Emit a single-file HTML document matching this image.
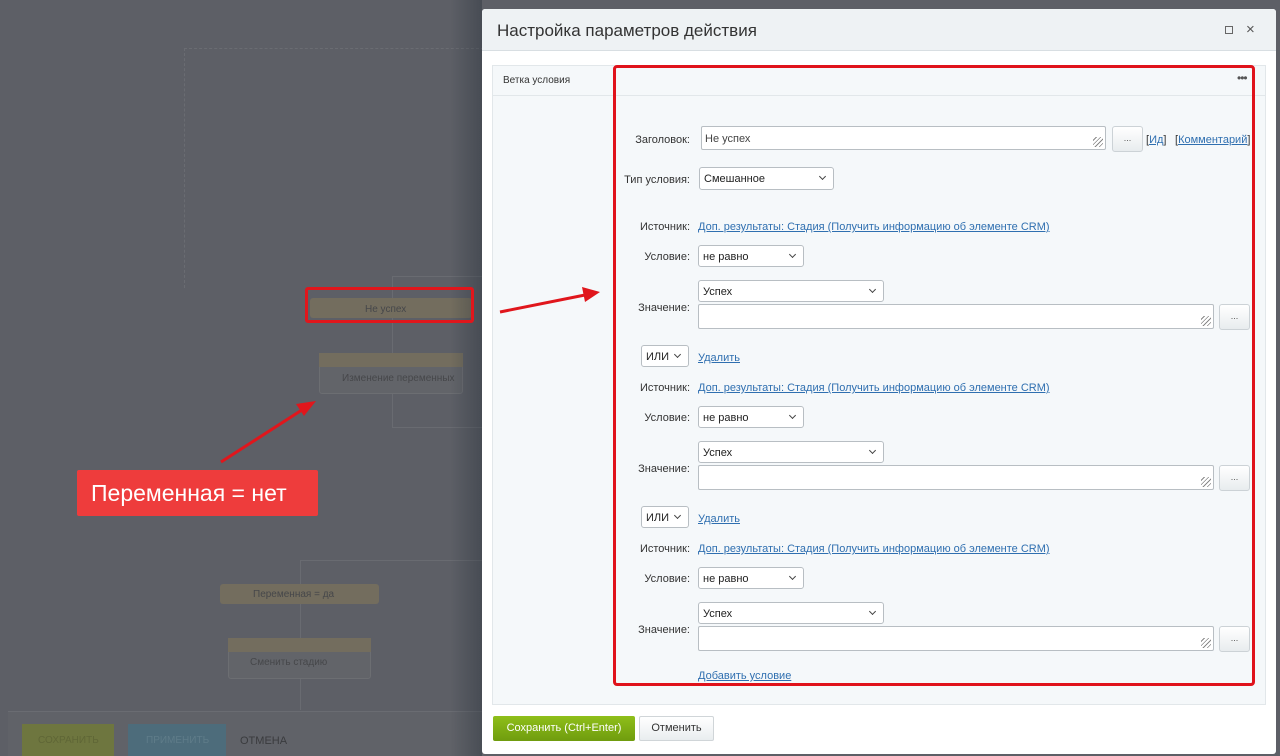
<!DOCTYPE html>
<html><head><meta charset="utf-8"><style>
*{box-sizing:border-box;margin:0;padding:0}
body{width:1280px;height:756px;overflow:hidden;background:#5d5f66;font-family:"Liberation Sans",sans-serif;position:relative;font-size:11px;color:#333}
.a{position:absolute}
.lbl{position:absolute;text-align:right;width:120px;font-size:11px;color:#333}
.lnk{position:absolute;color:#2f6fb0;text-decoration:underline;font-size:11px;white-space:nowrap}
.sel{position:absolute;background:#fff;border:1px solid #b8bec3;border-radius:3px;font-size:11px;padding:5px 4px 3px;height:22px;line-height:12px;color:#222}
.sel:after{content:"";position:absolute;right:8px;top:6px;width:4px;height:4px;border-right:1.5px solid #444;border-bottom:1.5px solid #444;transform:rotate(45deg)}
.ta{position:absolute;background:#fff;border:1px solid #b8bec3;border-radius:2px;height:25px}
.ta:after{content:"";position:absolute;right:2px;bottom:2px;width:10px;height:10px;background:repeating-linear-gradient(135deg,transparent 0 2px,#888 2px 3px)}
.btn{position:absolute;width:31px;height:26px;border:1px solid #ccd2d6;border-radius:3px;background:linear-gradient(#fff,#e8ecee);text-align:center;font-size:9px;line-height:22px;color:#555}
.node{position:absolute;background:#626469;border:1px solid #6c6e72}
.hdr{position:absolute;background:#736d5e}
.nt{position:absolute;color:#46474a;font-size:10px}
</style></head><body>
<div class="a" style="left:184px;top:48px;width:0;height:240px;border-left:1px dashed #6a6c72"></div>
<div class="a" style="left:184px;top:48px;width:300px;height:0;border-top:1px dashed #6a6c72"></div>
<div class="a" style="left:392px;top:276px;width:92px;height:152px;border:1px solid #696b71;border-right:none"></div>
<div class="a" style="left:300px;top:560px;width:184px;height:150px;border-left:1px solid #696b71;border-top:1px solid #696b71"></div>
<div class="hdr" style="left:310px;top:298px;width:162px;height:20px;border-radius:3px"></div>
<div class="nt" style="left:365px;top:304px">Не успех</div>
<div class="node" style="left:319px;top:353px;width:144px;height:41px;border-radius:3px"></div>
<div class="hdr" style="left:319px;top:353px;width:144px;height:14px"></div>
<div class="nt" style="left:342px;top:373px">Изменение переменных</div>
<div class="hdr" style="left:220px;top:584px;width:159px;height:20px;border-radius:3px"></div>
<div class="nt" style="left:253px;top:589px">Переменная = да</div>
<div class="node" style="left:228px;top:638px;width:143px;height:41px;border-radius:3px"></div>
<div class="hdr" style="left:228px;top:638px;width:143px;height:14px"></div>
<div class="nt" style="left:250px;top:657px">Сменить стадию</div>
<div class="a" style="left:8px;top:711px;width:476px;height:45px;background:#606268;border-top:1px solid #6a6c72"></div>
<div class="a" style="left:22px;top:724px;width:92px;height:32px;background:#6e763f"></div>
<div class="a" style="left:128px;top:724px;width:98px;height:32px;background:#4d6c7b"></div>
<div class="nt" style="left:38px;top:735px;color:#5f6636">СОХРАНИТЬ</div>
<div class="nt" style="left:146px;top:735px;color:#5f7c89">ПРИМЕНИТЬ</div>
<div class="nt" style="left:240px;top:735px;font-size:11px;color:#3a3b3e">ОТМЕНА</div>
<div class="a" style="left:450px;top:0;width:32px;height:756px;background:linear-gradient(90deg,rgba(0,0,0,0),rgba(30,40,50,.35))"></div>
<div class="a" style="left:305px;top:287px;width:169px;height:36px;border:3px solid #e0161c;border-radius:3px"></div>
<div class="a" style="left:77px;top:470px;width:241px;height:46px;background:#ee3c3c;border-radius:2px;color:#fff;font-size:23px;line-height:46px;padding-left:14px">Переменная = нет</div>
<!-- modal -->
<div class="a" style="left:482px;top:9px;width:794px;height:745px;background:#fff;border-radius:3px"></div>
<div class="a" style="left:482px;top:9px;width:794px;height:42px;background:#eef2f4;border-bottom:1px solid #d8dee2;border-radius:3px 3px 0 0"></div>
<div class="a" style="left:497px;top:21px;font-size:17px;color:#333">Настройка параметров действия</div>
<div class="a" style="left:1225px;top:26px;width:8px;height:8px;border:1px solid #666"></div>
<div class="a" style="left:1246px;top:21px;font-size:15px;color:#555">×</div>
<div class="a" style="left:492px;top:65px;width:774px;height:640px;background:#f5f8fa;border:1px solid #e2e7ea"></div>
<div class="a" style="left:492px;top:95px;width:774px;height:1px;background:#e2e7ea"></div>
<div class="a" style="left:503px;top:75px;font-size:10px;color:#333">Ветка условия</div>
<div class="a" style="left:1237px;top:71px;font-size:12px;color:#555;letter-spacing:-1px">•••</div>
<div class="lbl" style="left:570px;top:134px">Заголовок:</div>
<div class="ta" style="left:701px;top:126px;width:405px;height:24px"><span style="position:absolute;left:3px;top:6px;font-size:11px;color:#444">Не успех</span></div>
<div class="btn" style="left:1112px;top:126px">...</div>
<div class="a" style="left:1146px;top:134px;color:#333">[<span style="color:#2f6fb0;text-decoration:underline">Ид</span>]</div>
<div class="a" style="left:1175px;top:134px;color:#333">[<span style="color:#2f6fb0;text-decoration:underline">Комментарий</span>]</div>
<div class="lbl" style="left:570px;top:174px">Тип условия:</div>
<div class="sel" style="left:699px;top:167px;width:135px;height:23px">Смешанное</div>

<div class="lbl" style="left:570px;top:221px">Источник:</div>
<div class="lnk" style="left:698px;top:221px">Доп. результаты: Стадия (Получить информацию об элементе CRM)</div>
<div class="lbl" style="left:570px;top:251px">Условие:</div>
<div class="sel" style="left:698px;top:245px;width:106px">не равно</div>
<div class="sel" style="left:698px;top:280px;width:186px">Успех</div>
<div class="lbl" style="left:570px;top:302px">Значение:</div>
<div class="ta" style="left:698px;top:304px;width:516px"></div>
<div class="btn" style="left:1219px;top:304px">...</div>
<div class="sel" style="left:641px;top:345px;width:48px">ИЛИ</div>
<div class="lnk" style="left:698px;top:352px">Удалить</div>

<div class="lbl" style="left:570px;top:382px">Источник:</div>
<div class="lnk" style="left:698px;top:382px">Доп. результаты: Стадия (Получить информацию об элементе CRM)</div>
<div class="lbl" style="left:570px;top:412px">Условие:</div>
<div class="sel" style="left:698px;top:406px;width:106px">не равно</div>
<div class="sel" style="left:698px;top:441px;width:186px">Успех</div>
<div class="lbl" style="left:570px;top:463px">Значение:</div>
<div class="ta" style="left:698px;top:465px;width:516px"></div>
<div class="btn" style="left:1219px;top:465px">...</div>
<div class="sel" style="left:641px;top:506px;width:48px">ИЛИ</div>
<div class="lnk" style="left:698px;top:513px">Удалить</div>

<div class="lbl" style="left:570px;top:543px">Источник:</div>
<div class="lnk" style="left:698px;top:543px">Доп. результаты: Стадия (Получить информацию об элементе CRM)</div>
<div class="lbl" style="left:570px;top:573px">Условие:</div>
<div class="sel" style="left:698px;top:567px;width:106px">не равно</div>
<div class="sel" style="left:698px;top:602px;width:186px">Успех</div>
<div class="lbl" style="left:570px;top:624px">Значение:</div>
<div class="ta" style="left:698px;top:626px;width:516px"></div>
<div class="btn" style="left:1219px;top:626px">...</div>
<div class="lnk" style="left:698px;top:670px">Добавить условие</div>
<div class="a" style="left:613px;top:65px;width:642px;height:621px;border:3px solid #e0121b;border-radius:4px"></div>
<div class="a" style="left:493px;top:716px;width:142px;height:25px;background:linear-gradient(#8fbf1a,#6f9c0e);border-radius:2px;color:#fff;font-size:11px;line-height:25px;text-align:center">Сохранить (Ctrl+Enter)</div>
<div class="a" style="left:639px;top:716px;width:75px;height:25px;background:linear-gradient(#fff,#e9edef);border:1px solid #d0d5d8;border-radius:2px;color:#333;font-size:11px;line-height:23px;text-align:center">Отменить</div>
<svg class="a" style="left:0;top:0" width="1280" height="756">
<line x1="221" y1="462" x2="305" y2="408" stroke="#e0161c" stroke-width="3"/>
<polygon points="316,401 296,404 304,416" fill="#e0161c"/>
<line x1="500" y1="312" x2="585" y2="295" stroke="#e0161c" stroke-width="3"/>
<polygon points="600,292 582,287 585,302" fill="#e0161c"/>
</svg>
</body></html>
